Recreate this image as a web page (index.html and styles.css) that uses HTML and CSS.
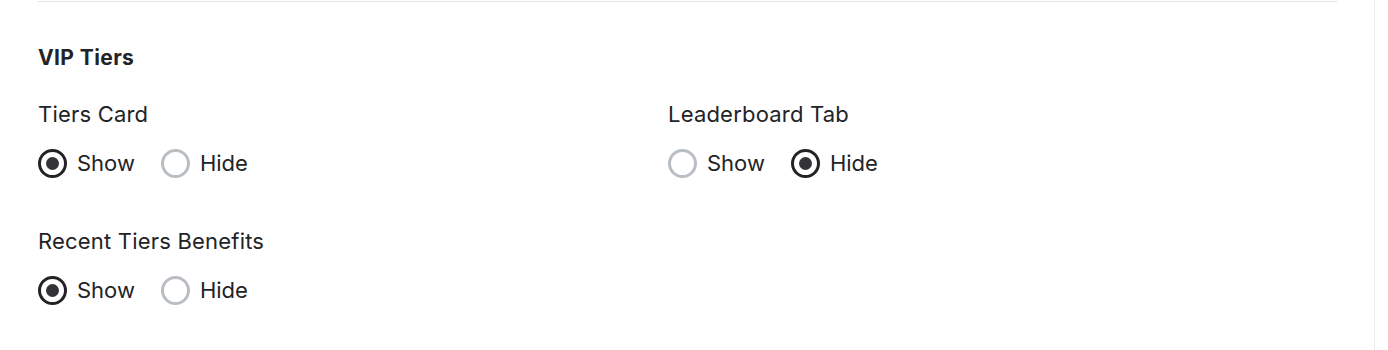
FILE: index.html
```html
<!DOCTYPE html>
<html>
<head>
<meta charset="utf-8">
<link rel="stylesheet" href="styles.css">
</head>
<body>
<div class="page">
  <div class="main">
    <div class="divider"></div>
    <section class="section">
      <h2 class="title">VIP Tiers</h2>
      <div class="grid">
        <div class="field">
          <div class="label">Tiers Card</div>
          <div class="options">
            <label class="option"><span class="radio checked"></span>Show</label>
            <label class="option"><span class="radio"></span>Hide</label>
          </div>
        </div>
        <div class="field">
          <div class="label">Leaderboard Tab</div>
          <div class="options">
            <label class="option"><span class="radio"></span>Show</label>
            <label class="option"><span class="radio checked"></span>Hide</label>
          </div>
        </div>
        <div class="field">
          <div class="label">Recent Tiers Benefits</div>
          <div class="options">
            <label class="option"><span class="radio checked"></span>Show</label>
            <label class="option"><span class="radio"></span>Hide</label>
          </div>
        </div>
      </div>
    </section>
  </div>
</div>
</body>
</html>
```

FILE: styles.css
```css
html, body {
  margin: 0;
  padding: 0;
  background: #ffffff;
}
body {
  font-family: Inter, "Noto Sans", sans-serif;
  color: #222326;
}
.page {
  display: flex;
  height: 350px;
}
.main {
  width: 1375px;
  border-right: 1px solid #ececec;
  box-sizing: border-box;
}
.divider {
  margin: 1px 0 0 38px;
  width: 1299px;
  height: 1px;
  background: #e3e3e3;
}
.section {
  padding-left: 38px;
}
.title {
  margin: 42px 0 0 0;
  font-size: 21px;
  line-height: 28px;
  font-weight: 700;
  letter-spacing: 0.4px;
}
.grid {
  display: grid;
  grid-template-columns: 630px 1fr;
  row-gap: 49px;
  margin-top: 28px;
}
.label {
  font-size: 22px;
  line-height: 28px;
  letter-spacing: 0.2px;
}
.options {
  display: flex;
  gap: 26px;
  margin-top: 21px;
}
.option {
  display: flex;
  align-items: center;
  gap: 10px;
  font-size: 22px;
  line-height: 29px;
}
.radio {
  width: 29px;
  height: 29px;
  box-sizing: border-box;
  border-radius: 50%;
  border: 3px solid #b9bec5;
  display: flex;
  align-items: center;
  justify-content: center;
}
.radio.checked {
  border-color: #222326;
}
.radio.checked::after {
  content: "";
  width: 13px;
  height: 13px;
  border-radius: 50%;
  background: #333438;
}
```
